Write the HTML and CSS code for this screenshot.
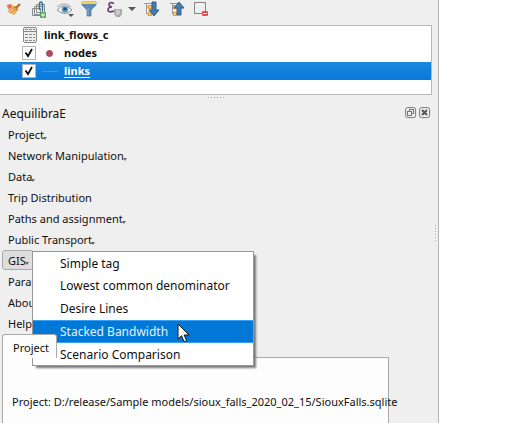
FILE: index.html
```html
<!DOCTYPE html>
<html lang="en">
<head>
<meta charset="utf-8">
<title>AequilibraE</title>
<link rel="stylesheet" href="styles.css">
</head>
<body>
<main class="dock">
  <div class="toolbar">
    <svg width="212" height="25" viewBox="0 0 212 25" fill="none">
      <path d="M7 6l5-2 4 5-5 4z" fill="#f3cf55"/><path d="M7 5l4-1 1 4-4 1z" fill="#e76d60"/><path d="M8 10l4-1 3 4-4 1z" fill="#75b9e4"/>
      <path d="M20 4l-4 4" stroke="#b87325" stroke-width="2.4"/><path d="M14 6l4 4-4 5-6-3z" fill="#e6a04d"/><path d="M14 6l4 4" stroke="#9d622c"/><path d="M10 12l3-3m-1 5 3-3" stroke="#f6d396"/>
      <path d="M36.5 4.500h8v8h-8zM34.500 6.500h8v8h-8zM32.500 8.500h8v7h-8z" stroke="#858b87"/><path d="M39.500 10V4q0-2 1.500-2t1.500 2v7" stroke="#376a96" stroke-width="1.300"/><rect x="40" y="12" width="6" height="6" rx="1" fill="#56a764"/><path d="M41 15h4m-2-2v4" stroke="#fff"/>
      <path d="M57 10q7-8 15 0-7 7-15 0z" fill="#f8faf8" stroke="#889196"/><path d="M57 7q7-6 14 0" stroke="#98a0a3"/><circle cx="65" cy="9.500" r="3.300" fill="#649bc4"/><circle cx="65" cy="9" r="1.600" fill="#244668"/><path d="M68 14h6l-3 3z" fill="#555"/>
      <path d="M82 2h14v3l-5 5v6h-4v-6l-5-5z" fill="#5d8cb5" stroke="#477299" stroke-width=".7"/><path d="M82 2h14v2H82z" fill="#f3d54e"/><path d="M88 8v7" stroke="#83aed0"/>
      <path d="M114 3.500q-5-2-5 1 0 2 3 2.500-4 0-4 3 0 3 6 1" stroke="#6d3f79" stroke-width="1.700"/><path d="M114 9h8v5l-2 3h-4l-2-3z" fill="#aaa"/><path d="M117 10v5m2-5v4" stroke="#eee"/>
      <path d="M128 7h8l-4 4z" fill="#555"/>
      <path d="M144 3.500h9M146.500 3v11h3m-3-7h3" stroke="#999"/><rect x="148.500" y="5.500" width="3" height="3" fill="#ffd475" stroke="#ed982d"/><rect x="148.500" y="12.500" width="3" height="3" fill="#ffd475" stroke="#ed982d"/><path d="M152 2h4v8h3l-5 6-5-6h3z" fill="#487aae" stroke="#365f89"/>
      <path d="M170 3.500h9M172.500 3v11h3m-3-7h3" stroke="#999"/><rect x="173.500" y="5.500" width="3" height="3" fill="#ffd475" stroke="#ed982d"/><rect x="173.500" y="12.500" width="3" height="3" fill="#ffd475" stroke="#ed982d"/><path d="M177 15h4V8h3l-5-6-5 6h3z" fill="#487aae" stroke="#365f89"/>
      <rect x="194.500" y="2.500" width="11" height="11" stroke="#858585"/><rect x="202" y="11" width="6" height="5" rx="1" fill="#ed4c4c"/><path d="M203 13.500h4" stroke="#fff"/>
    </svg>
  </div>
  <div class="tree">
    <div class="node"><svg class="table" width="14" height="16" viewBox="0 0 14 16"><rect x=".5" y=".5" width="13" height="15" rx="1.500" fill="#eee" stroke="#888"/><path d="M1 4.500h12" stroke="#888"/><path d="M2 7.500h3m1 0h3m1 0h2M2 10.500h3m1 0h3m1 0h2M2 13.500h3m1 0h3m1 0h2M2 2.500h3m1 0h3m1 0h2" stroke="#8b8b8b"/></svg><span class="w-table">link_flows_c</span></div>
    <div class="node"><span class="check"><svg width="12" height="12"><path d="M2.500 5.500 5 9l4-7" fill="none" stroke="#111" stroke-width="1.800"/></svg></span><i class="point"></i><span class="w-nodes">nodes</span></div>
    <div class="node selected"><span class="check"><svg width="12" height="12"><path d="M2.500 5.500 5 9l4-7" fill="none" stroke="#111" stroke-width="1.800"/></svg></span><i class="line"></i><span class="w-links">links</span></div>
  </div>
  <div class="splitter"></div>
  <header class="title"><span>AequilibraE</span>
    <svg width="26" height="12" viewBox="0 0 26 12" fill="none" stroke="#777"><rect x=".6" y=".6" width="10" height="10" rx="2"/><rect x="4.500" y="2.500" width="4" height="4"/><rect x="2.500" y="4.500" width="4" height="4" fill="#efefef"/><rect x="14.600" y=".6" width="10" height="10" rx="2"/><path d="m17 3 5 5m0-5-5 5" stroke="#555" stroke-width="2"/></svg>
  </header>
  <nav class="commands">
    <div class="command"><span class="c-project">Project</span><i class="arrow"></i></div>
    <div class="command"><span class="c-network">Network Manipulation</span><i class="arrow"></i></div>
    <div class="command"><span class="c-data">Data</span><i class="arrow"></i></div>
    <div class="command"><span class="c-trip">Trip Distribution</span></div>
    <div class="command"><span class="c-paths">Paths and assignment</span><i class="arrow"></i></div>
    <div class="command"><span class="c-public">Public Transport</span><i class="arrow"></i></div>
    <div class="command pressed"><span>GIS</span><i class="arrow"></i></div>
    <div class="command"><span>Parameters</span></div>
    <div class="command"><span>About</span></div>
    <div class="command"><span>Help</span></div>
  </nav>
  <section class="tabs">
    <div class="tab">Project</div>
    <div class="page"><span>Project: D:/release/Sample models/sioux_falls_2020_02_15/SiouxFalls.sqlite</span></div>
  </section>
  <div class="edge-grip"></div>
</main>
<div class="menu">
  <div class="item"><span class="m-simple">Simple tag</span></div>
  <div class="item"><span class="m-lowest">Lowest common denominator</span></div>
  <div class="item"><span class="m-desire">Desire Lines</span></div>
  <div class="item active"><span class="m-stacked">Stacked Bandwidth</span></div>
  <div class="item"><span class="m-scenario">Scenario Comparison</span></div>
</div>
<svg class="cursor" width="13" height="20" viewBox="0 0 13 20"><path d="M1 1v15l3.500-3.200 2.600 6 2.600-1.100-2.600-5.700H12z" fill="#fff" stroke="#111"/></svg>
</body>
</html>
```
FILE: styles.css
```css
* { box-sizing: border-box; }
body {
  margin: 0;
  width: 520px;
  height: 423px;
  overflow: hidden;
  position: relative;
  background: #fff;
  color: #101010;
  font: 11px/21px "Noto Sans", "Open Sans", sans-serif;
  white-space: nowrap;
}
.dock {
  width: 439px;
  height: 423px;
  display: flex;
  flex-direction: column;
  background: #efefef;
  border-right: 1px solid #b4b4b4;
  position: relative;
}
svg { display: block; flex: none; }
.toolbar { height: 25px; flex: none; }
.tree {
  width: 432px;
  height: 70px;
  flex: none;
  background: #fff;
  border: 1px solid #b8b8b8;
  border-left: 0;
}
.node {
  height: 18px;
  padding-left: 22px;
  display: flex;
  align-items: center;
  font-weight: 700;
  line-height: 18px;
}
.table { margin: 0 7px 0 1px; }
.check { width: 14px; height: 14px; border: 1px solid #b5b5b5; background: #fff; }
.point { width: 7px; height: 7px; margin: 0 11px 0 10px; border-radius: 50%; background: #b84a50; border: 1px solid #8d4b50; }
.line { width: 16px; height: 1px; margin: 0 6px; background: #65919c; }
.selected { background: linear-gradient(#1c87df, #0779dc); color: #fff; }
.w-links { text-decoration: underline; text-underline-offset: 2px; }
.splitter { height: 7px; flex: none; padding: 2px 0 0 208px; }
.splitter::before {
  content: "";
  display: block;
  width: 16px;
  height: 1px;
  background: repeating-linear-gradient(90deg, #aaa 0 1px, transparent 1px 3px);
}
.title {
  height: 22px;
  flex: none;
  padding: 0 7px 0 2px;
  display: flex;
  align-items: center;
  justify-content: space-between;
  font-size: 12px;
}
.commands { height: 210px; flex: none; padding-left: 2px; }
.command { width: max-content; height: 21px; padding-left: 6px; display: flex; align-items: center; }
.arrow { border: 2.5px solid transparent; border-top: 3px solid #666; border-bottom: 0; margin-top: 7px; margin-left: -1px; }
.pressed { width: 32px; height: 20px; margin-bottom: 1px; border: 1px solid #aaa; border-radius: 3px; padding-left: 5px; background: #dedede; }
.tabs { width: 387px; margin-left: 2px; }
.tab {
  width: 55px;
  height: 24px;
  padding-left: 10px;
  background: #fdfdfd;
  border: 1px solid #aaa;
  border-bottom: 0;
  border-radius: 3px 3px 0 0;
  line-height: 25px;
  position: relative;
  z-index: 1;
}
.page { height: 67px; margin-top: -1px; padding: 33px 0 0 9px; border: 1px solid #aaa; border-bottom: 0; background: #fdfdfd; }
.edge-grip {
  position: absolute;
  left: 435px;
  top: 225px;
  width: 1px;
  height: 16px;
  background: repeating-linear-gradient(#aaa 0 1px, transparent 1px 3px);
}
.menu {
  position: absolute;
  left: 32px;
  top: 251px;
  width: 222px;
  height: 115px;
  border: 1px solid #989898;
  background: #fff;
  box-shadow: 3px 3px 2px -1px #777;
  font-size: 12px;
}
.item { height: 23px; padding-left: 27px; line-height: 23px; }
.item:first-child, .item:last-child { height: 22px; }
.active { background: #0078d7; color: #e4f1fb; border: 1px solid #39a0f5; border-width: 1px 0; line-height: 21px; }
.cursor { position: absolute; left: 177px; top: 323px; }
```
